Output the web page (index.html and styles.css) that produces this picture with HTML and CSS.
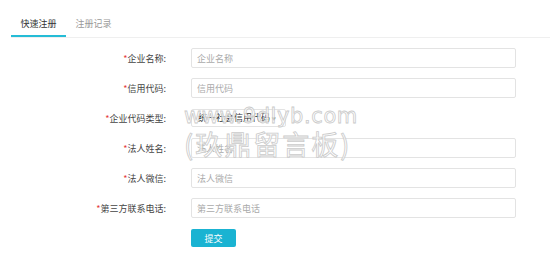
FILE: index.html
```html
<!DOCTYPE html>
<html lang="zh-CN">
<head>
    <meta charset="UTF-8">
    <title>快速注册</title>
    <link rel="stylesheet" href="styles.css">
</head>
<body>
    <div class="page">
        <div class="tabs">
            <div class="tab active">快速注册</div>
            <div class="tab">注册记录</div>
        </div>

        <form class="form">
            <div class="row">
                <label class="label"><span class="req">*</span>企业名称:</label>
                <input class="input" type="text" placeholder="企业名称">
            </div>
            <div class="row">
                <label class="label"><span class="req">*</span>信用代码:</label>
                <input class="input" type="text" placeholder="信用代码">
            </div>
            <div class="row">
                <label class="label"><span class="req">*</span>企业代码类型:</label>
                <div class="select">统一社会信用代码 <span class="arrow">▾</span></div>
            </div>
            <div class="row">
                <label class="label"><span class="req">*</span>法人姓名:</label>
                <input class="input" type="text" placeholder="法人姓名">
            </div>
            <div class="row">
                <label class="label"><span class="req">*</span>法人微信:</label>
                <input class="input" type="text" placeholder="法人微信">
            </div>
            <div class="row">
                <label class="label"><span class="req">*</span>第三方联系电话:</label>
                <input class="input" type="text" placeholder="第三方联系电话">
            </div>
            <div class="row">
                <span class="label"></span>
                <button class="btn" type="button">提交</button>
            </div>
        </form>

        <div class="watermark">
            <div class="wm-url">www.9dlyb.com</div>
            <div class="wm-name">(玖鼎留言板)</div>
        </div>
    </div>
</body>
</html>
```

FILE: styles.css
```css
body {
    margin: 0;
    background: #fff;
    font-family: "Noto Sans CJK SC", "Liberation Sans", sans-serif;
    font-size: 9px;
    color: #333;
}
.page {
    position: relative;
    padding: 10px 10px 0 11px;
}
.tabs {
    display: flex;
    width: 539px;
    height: 27px;
    border-bottom: 1px solid #efefef;
}
.tab {
    width: 55px;
    height: 25px;
    line-height: 27px;
    text-align: center;
    color: #999;
}
.tab.active {
    color: #333;
    border-bottom: 2px solid #25bcd6;
}
.form {
    margin-top: 10px;
}
.row {
    display: flex;
    align-items: center;
    height: 20px;
    margin-bottom: 10px;
}
.label {
    width: 155px;
    text-align: right;
    padding-right: 25px;
    color: #444;
}
.req {
    color: #e4393c;
}
.input {
    box-sizing: border-box;
    width: 325px;
    height: 20px;
    padding: 0 5px;
    border: 1px solid #e3e3e3;
    border-radius: 2px;
    font-family: inherit;
    font-size: 9px;
    color: #333;
    outline: none;
}
.input::placeholder {
    color: #aaa;
}
.select {
    box-sizing: border-box;
    width: 95px;
    height: 18px;
    line-height: 16px;
    padding-left: 6px;
    border: 1px solid #e3e3e3;
    border-radius: 2px;
    color: #333;
}
.arrow {
    font-size: 7px;
}
.btn {
    width: 45px;
    height: 18px;
    padding: 0;
    border: none;
    border-radius: 2px;
    background: #1ab3d2;
    color: #fff;
    font-family: inherit;
    font-size: 9px;
    cursor: pointer;
}
.watermark {
    position: absolute;
    left: 184px;
    top: 104px;
    color: rgba(255, 255, 255, 0.75);
    -webkit-text-stroke: 0.8px #cacaca;
    pointer-events: none;
}
.wm-url {
    font-family: "DejaVu Sans", sans-serif;
    font-size: 21px;
    line-height: 24px;
    letter-spacing: 0.6px;
}
.wm-name {
    font-family: "Noto Sans CJK SC", sans-serif;
    font-size: 27px;
    line-height: 30px;
    letter-spacing: 2px;
    margin-top: 1px;
}
```
